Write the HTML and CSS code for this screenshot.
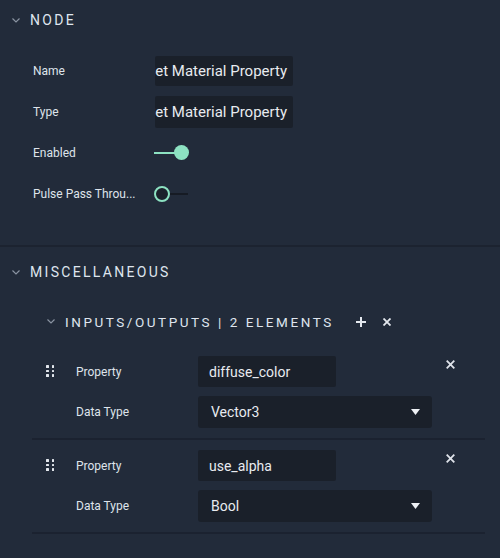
FILE: index.html
```html
<!DOCTYPE html>
<html>
<head>
<meta charset="utf-8">
<link rel="stylesheet" href="styles.css">
</head>
<body>
<div class="panel">
  <section class="section node">
    <div class="sec-head">
      <svg class="chev" width="8" height="5" viewBox="0 0 8 5"><polyline points="0.5,0.5 4,4 7.5,0.5" fill="none" stroke="#8a93a1" stroke-width="1.2"/></svg>
      <span class="sec-title">NODE</span>
    </div>
    <div class="rows">
      <div class="row">
        <span class="label">Name</span>
        <div class="field scroll"><span>Set Material Property</span></div>
      </div>
      <div class="row">
        <span class="label">Type</span>
        <div class="field scroll tall"><span>Set Material Property</span></div>
      </div>
      <div class="row">
        <span class="label">Enabled</span>
        <div class="toggle on"><span class="track"></span><span class="knob"></span></div>
      </div>
      <div class="row">
        <span class="label">Pulse Pass Throu...</span>
        <div class="toggle off"><span class="knob"></span><span class="track"></span></div>
      </div>
    </div>
  </section>
  <div class="divider"></div>
  <section class="section misc">
    <div class="sec-head">
      <svg class="chev" width="8" height="5" viewBox="0 0 8 5"><polyline points="0.5,0.5 4,4 7.5,0.5" fill="none" stroke="#8a93a1" stroke-width="1.2"/></svg>
      <span class="sec-title">MISCELLANEOUS</span>
    </div>
    <div class="sub-head">
      <svg class="chev" width="8" height="5" viewBox="0 0 8 5"><polyline points="0.5,0.5 4,4 7.5,0.5" fill="none" stroke="#8a93a1" stroke-width="1.2"/></svg>
      <span class="sub-title">INPUTS/OUTPUTS | 2 ELEMENTS</span>
      <span class="head-btn plus"><svg width="10" height="10" viewBox="0 0 10 10"><path d="M5 0V10M0 5H10" stroke="#e4e8ee" stroke-width="2"/></svg></span>
      <span class="head-btn x"><svg width="8" height="8" viewBox="0 0 8 8"><path d="M0.5 0.5L7.5 7.5M7.5 0.5L0.5 7.5" stroke="#e4e8ee" stroke-width="1.8"/></svg></span>
    </div>
    <div class="items">
      <div class="item">
        <div class="handle"><i></i><i></i><i></i><i></i><i></i><i></i></div>
        <span class="label">Property</span>
        <div class="field small">diffuse_color</div>
        <span class="remove"><svg width="9" height="9" viewBox="0 0 9 9"><path d="M0.7 0.7L8.3 8.3M8.3 0.7L0.7 8.3" stroke="#dfe3ea" stroke-width="1.8"/></svg></span>
        <span class="label row2">Data Type</span>
        <div class="select"><span>Vector3</span><svg width="9" height="6" viewBox="0 0 9 6"><path d="M0 0H9L4.5 6Z" fill="#eef1f5"/></svg></div>
      </div>
      <div class="item">
        <div class="handle"><i></i><i></i><i></i><i></i><i></i><i></i></div>
        <span class="label">Property</span>
        <div class="field small">use_alpha</div>
        <span class="remove"><svg width="9" height="9" viewBox="0 0 9 9"><path d="M0.7 0.7L8.3 8.3M8.3 0.7L0.7 8.3" stroke="#dfe3ea" stroke-width="1.8"/></svg></span>
        <span class="label row2">Data Type</span>
        <div class="select"><span>Bool</span><svg width="9" height="6" viewBox="0 0 9 6"><path d="M0 0H9L4.5 6Z" fill="#eef1f5"/></svg></div>
      </div>
    </div>
  </section>
</div>
</body>
</html>
```

FILE: styles.css
```css
* { box-sizing: border-box; }
html, body {
  margin: 0;
  padding: 0;
  background: #222b3a;
  width: 500px;
  height: 558px;
  overflow: hidden;
  font-family: Roboto, "Liberation Sans", sans-serif;
  color: #e1e6ed;
}
.panel {
  width: 500px;
  height: 558px;
  display: flex;
  flex-direction: column;
}
.sec-head {
  display: flex;
  align-items: center;
  height: 40px;
  padding-left: 12px;
}
.misc .sec-head {
  height: 50px;
}
.chev { display: block; flex: none; }
.sec-title {
  margin-left: 10px;
  font-size: 14px;
  letter-spacing: 2.3px;
  color: #dfe5ee;
  font-weight: 400;
}
.rows {
  display: flex;
  flex-direction: column;
  gap: 10px;
  padding: 15px 0 36px 33px;
}
.row {
  display: flex;
  align-items: center;
  height: 31px;
}
.label {
  font-size: 12px;
  color: #dfe4eb;
  width: 121px;
  flex: none;
  white-space: nowrap;
}
.field {
  background: #1a202a;
  font-size: 14px;
  color: #e8ebf0;
  display: flex;
  align-items: center;
  white-space: nowrap;
  overflow: hidden;
  border-radius: 2px;
}
.field.scroll {
  width: 138px;
  height: 30px;
  justify-content: flex-end;
  padding-right: 6px;
  margin-left: 1px;
  font-size: 15px;
}
.field.scroll.tall { height: 32px; }
.field.scroll span { flex: none; }
.toggle {
  display: flex;
  align-items: center;
  height: 16px;
}
.toggle .knob {
  width: 15px;
  height: 15px;
  border-radius: 50%;
  flex: none;
}
.toggle .track {
  height: 2px;
  flex: none;
}
.toggle.on .track {
  width: 22px;
  background: #8de2c2;
  margin-right: -2px;
}
.toggle.on .knob {
  background: #8de2c2;
}
.toggle.off .knob {
  width: 16px;
  height: 16px;
  border: 2px solid #8de2c2;
  background: #1b212b;
}
.toggle.off .track {
  width: 18px;
  background: #161b24;
}
.divider {
  height: 2px;
  background: #1c2330;
  flex: none;
}
.sub-head {
  display: flex;
  align-items: center;
  height: 49px;
  padding-left: 47px;
}
.sub-title {
  margin-left: 10px;
  font-size: 13.5px;
  letter-spacing: 2.55px;
  color: #dfe5ee;
  font-weight: 400;
}
.head-btn { display: flex; align-items: center; }
.head-btn.plus { margin-left: 22px; }
.head-btn.x { margin-left: 17px; }
.items {
  margin: 0 15px 0 32px;
}
.item {
  display: grid;
  grid-template-columns: 8px 122px 1fr 16px;
  grid-template-rows: 31px 32px;
  row-gap: 9px;
  align-items: center;
  padding: 10px 27px 10px 14px;
  border-bottom: 2px solid #1b2230;
}
.handle {
  display: grid;
  grid-template-columns: 2.5px 2.5px;
  grid-auto-rows: 2.5px;
  column-gap: 3px;
  row-gap: 2px;
  width: 8px;
  height: 11.5px;
  margin-top: -1px;
}
.handle i {
  display: block;
  width: 2.5px;
  height: 2.5px;
  background: #e3e7ed;
  border-radius: 0.5px;
}
.item .label {
  width: auto;
  margin-left: 22px;
  grid-column: 2;
}
.item .label.row2 { grid-row: 2; }
.field.small {
  width: 138px;
  height: 31px;
  padding-left: 11px;
  margin-left: 22px;
  grid-column: 3;
}
.select {
  grid-column: 3;
  grid-row: 2;
  margin-left: 22px;
  width: 234px;
  height: 32px;
  background: #1a202a;
  border-radius: 3px;
  display: flex;
  align-items: center;
  justify-content: space-between;
  padding: 0 12px 0 13px;
  font-size: 14px;
  color: #e8ebf0;
}
.select svg { display: block; }
.remove {
  grid-column: 4;
  grid-row: 1;
  align-self: start;
  width: 16px;
  height: 16px;
  display: flex;
  align-items: center;
  justify-content: center;
}
```
